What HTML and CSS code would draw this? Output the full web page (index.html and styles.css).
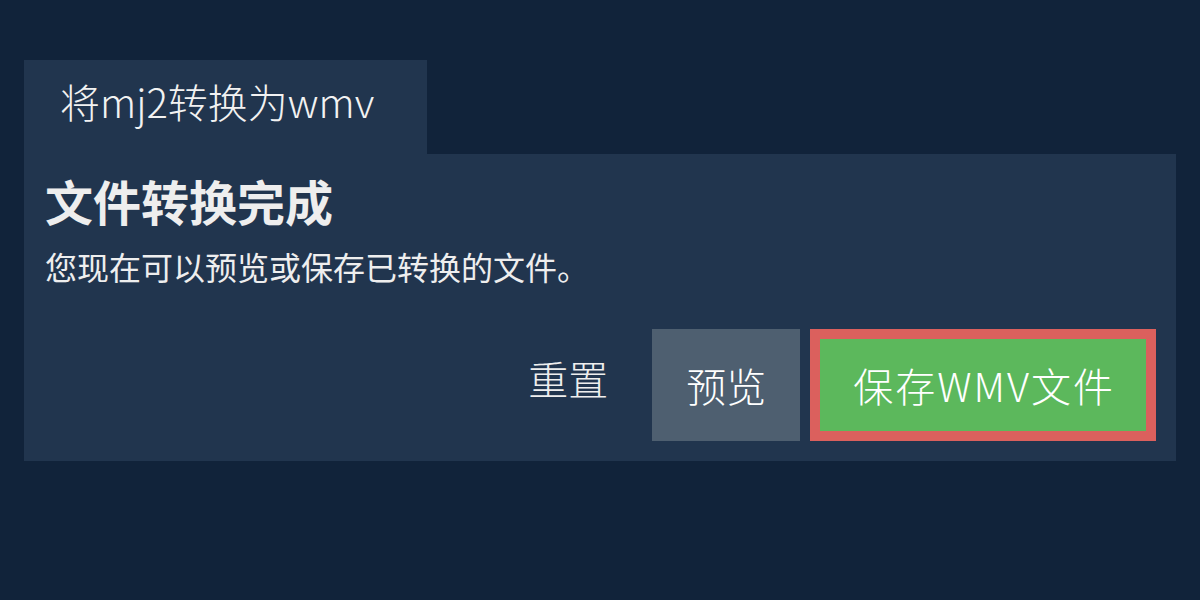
FILE: index.html
```html
<!DOCTYPE html>
<html lang="zh-CN">
<head>
<meta charset="utf-8">
<title>将mj2转换为wmv</title>
<link rel="stylesheet" href="styles.css">
</head>
<body>
<div class="wrap">
  <div class="tab">将mj2转换为wmv</div>
  <section class="panel">
    <h1 class="title">文件转换完成</h1>
    <p class="desc">您现在可以预览或保存已转换的文件。</p>
    <div class="actions">
      <button class="btn btn-reset">重置</button>
      <button class="btn btn-preview">预览</button>
      <button class="btn btn-save">保存WMV文件</button>
    </div>
  </section>
</div>
</body>
</html>
```
FILE: styles.css
```css
html, body {
  margin: 0;
  padding: 0;
}
body {
  background: #11233a;
  font-family: "Noto Sans CJK SC", "Noto Sans", sans-serif;
  color: #eeeeee;
}
.wrap {
  padding: 60px 24px 0;
}
.tab {
  display: inline-flex;
  align-items: center;
  height: 94px;
  padding: 0 53px 12px 36px;
  box-sizing: border-box;
  background: #21354e;
  font-size: 40px;
  font-weight: 300;
  color: #f2f2f2;
}
.panel {
  background: #21354e;
  padding: 14px 20px 20px 21px;
}
.title {
  margin: 0;
  font-size: 48px;
  font-weight: 700;
  line-height: 64px;
  color: #eeeeee;
}
.desc {
  margin: 11px 0 0;
  font-size: 32px;
  line-height: 46px;
  color: #eeeeee;
}
.actions {
  display: flex;
  justify-content: flex-end;
  gap: 10px;
  margin-top: 40px;
}
.btn {
  height: 112px;
  padding: 0 34px;
  border: 0;
  box-sizing: border-box;
  font-family: "Noto Sans CJK SC", "Noto Sans", sans-serif;
  font-size: 40px;
  font-weight: 300;
  color: #ffffff;
  background: transparent;
}
.btn-reset {
  padding-bottom: 14px;
  color: #eeeeee;
}
.btn-preview {
  background: #4e5f70;
}
.btn-save {
  background: #5cb85c;
  border: 10px solid #db605d;
  padding: 0 31px 0 33px;
  letter-spacing: 2px;
}
```
